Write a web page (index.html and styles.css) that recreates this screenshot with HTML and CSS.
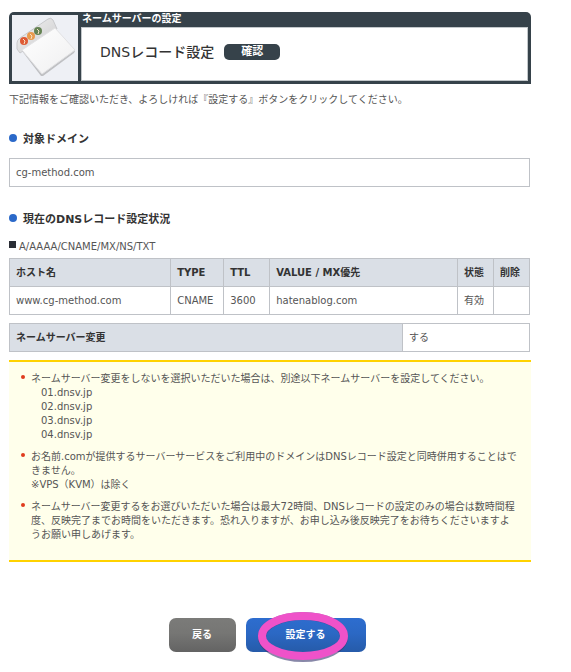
FILE: index.html
```
<!DOCTYPE html>
<html lang="ja">
<head>
  <meta charset="UTF-8">
  <title>DNSレコード設定 確認</title>
  <link rel="stylesheet" href="styles.css">
</head>
<body>
  <header class="header">
    <div class="header-icon">
      <svg width="66" height="65" viewBox="0 0 66 65" aria-hidden="true">
        <defs>
          <linearGradient id="tab" x1="0" y1="0" x2="1" y2="1">
            <stop offset="0" stop-color="#f4f4f4"/>
            <stop offset="1" stop-color="#c9c9cb"/>
          </linearGradient>
          <linearGradient id="sheet" x1="0" y1="0" x2="1" y2="1">
            <stop offset="0" stop-color="#ffffff"/>
            <stop offset="1" stop-color="#efeff0"/>
          </linearGradient>
        </defs>
        <path d="M5 34 L5 28 Q5 25 8 23 L36 4 Q39 2 41 5 L45 14 L11 36 L8 38 Z" fill="url(#tab)" stroke="#c8c9cc"/>
        <path d="M10 36 L43 14 L63 36 L62 38 L31 61 L29 61 Z" fill="#bfc0c3"/>
        <path d="M10 35 L43 13 L63 35 L30 59 Z" fill="url(#sheet)" stroke="#e2e2e4"/>
        <circle cx="12" cy="26" r="4" fill="#de5a35"/>
        <circle cx="19" cy="21" r="4" fill="#e99a4d"/>
        <circle cx="26" cy="16" r="4" fill="#648253"/>
        <path d="M11 24 l2 2 l-1 3 M18 19 l2 2 l-1 3 M25 14 l2 2 l-1 3" fill="none" stroke="#f7e2c4"/>
      </svg>
    </div>
    <div class="header-main">
      <p class="header-category">ネームサーバーの設定</p>
      <div class="header-title">
        <h1>DNSレコード設定</h1>
        <span class="step">確認</span>
      </div>
    </div>
  </header>

  <p class="lead">下記情報をご確認いただき、よろしければ『設定する』ボタンをクリックしてください。</p>

  <h2>対象ドメイン</h2>
  <p class="domain">cg-method.com</p>

  <h2>現在のDNSレコード設定状況</h2>
  <h3>A/AAAA/CNAME/MX/NS/TXT</h3>
  <table class="records">
    <thead>
      <tr>
        <th class="col-host">ホスト名</th>
        <th class="col-type">TYPE</th>
        <th class="col-ttl">TTL</th>
        <th>VALUE / MX優先</th>
        <th class="col-state">状態</th>
        <th class="col-state">削除</th>
      </tr>
    </thead>
    <tbody>
      <tr>
        <td>www.cg-method.com</td>
        <td>CNAME</td>
        <td>3600</td>
        <td>hatenablog.com</td>
        <td>有効</td>
        <td></td>
      </tr>
    </tbody>
  </table>

  <table class="change">
    <tr>
      <th>ネームサーバー変更</th>
      <td class="col-change">する</td>
    </tr>
  </table>

  <ul class="notes">
    <li>ネームサーバー変更をしないを選択いただいた場合は、別途以下ネームサーバーを設定してください。
      <div class="servers">01.dnsv.jp<br>02.dnsv.jp<br>03.dnsv.jp<br>04.dnsv.jp</div>
    </li>
    <li>お名前.comが提供するサーバーサービスをご利用中のドメインはDNSレコード設定と同時併用することはできません。<br>※VPS（KVM）は除く</li>
    <li>ネームサーバー変更するをお選びいただいた場合は最大72時間、DNSレコードの設定のみの場合は数時間程度、反映完了までお時間をいただきます。恐れ入りますが、お申し込み後反映完了をお待ちくださいますようお願い申しあげます。</li>
  </ul>

  <div class="buttons">
    <button type="button" class="btn back">戻る</button>
    <div class="submit-wrap">
      <button type="submit" class="btn submit">設定する</button>
      <svg class="circle" width="92" height="50" viewBox="0 0 92 50" aria-hidden="true">
        <ellipse cx="46" cy="25" rx="41" ry="21" fill="none" stroke="#39386e" stroke-width="8" opacity="0.6"/>
        <ellipse cx="46" cy="24" rx="41" ry="20" fill="none" stroke="#ef52c9" stroke-width="8"/>
      </svg>
    </div>
  </div>
</body>
</html>
```

FILE: styles.css
```
* { box-sizing: border-box; }

body {
  margin: 0;
  padding: 12px 40px 20px 9px;
  min-height: 100vh;
  background: #fff;
  color: #555;
  font-family: "DejaVu Sans", "Noto Sans CJK JP", sans-serif;
  font-size: 10px;
  line-height: 14px;
}

h1, h2, h3, p, ul { margin: 0; padding: 0; }

/* header */
.header {
  display: flex;
  gap: 3px;
  padding: 0 3px 3px;
  background: #36424a;
  border-radius: 5px 5px 0 0;
}
.header-icon {
  margin-top: 3px;
  height: 66px;
  background: #eef0f5;
}
.header-icon svg { display: block; }
.header-main {
  flex: 1;
  display: flex;
  flex-direction: column;
}
.header-category {
  height: 15px;
  line-height: 13px;
  padding-left: 1px;
  color: #fff;
  font-weight: bold;
}
.header-title {
  flex: 1;
  display: flex;
  align-items: center;
  gap: 10px;
  padding: 0 18px 4px;
  background: #fff;
  border: 1px solid #c3c8cb;
}
.header-title h1 {
  color: #333;
  font-size: 14px;
  line-height: 20px;
  font-weight: 500;
}
.step {
  width: 56px;
  border-radius: 5px;
  background: #36424a;
  color: #fff;
  font-size: 11px;
  line-height: 16px;
  font-weight: bold;
  text-align: center;
}

.lead { margin-top: 9px; }

h2 {
  display: flex;
  align-items: center;
  gap: 6px;
  margin: 25px 0 10px;
  color: #333;
  font-size: 11px;
  line-height: 16px;
}
h2::before {
  content: "";
  width: 8px;
  height: 8px;
  margin-bottom: 4px;
  border-radius: 50%;
  background: #2b69c9;
}
.domain {
  margin-right: 1px;
  padding: 7px 6px 6px;
  border: 1px solid #bfc2c7;
}
h3 {
  display: flex;
  align-items: center;
  gap: 3px;
  margin: 12px 0 4px;
  font-size: 10px;
  font-weight: normal;
}
h3::before {
  content: "";
  width: 7px;
  height: 7px;
  margin-bottom: 5px;
  background: #2a2d35;
}

/* tables */
table {
  width: calc(100% - 1px);
  table-layout: fixed;
  border-collapse: collapse;
}
th, td {
  height: 28px;
  padding: 0 6px;
  border: 1px solid #bfc2c7;
  text-align: left;
}
th {
  background: #dadfe6;
  color: #333;
}
.col-host { width: 31%; }
.col-type { width: 53px; }
.col-ttl { width: 46px; }
.col-state { width: 36px; }
.change { margin-top: 8px; }
.col-change { width: 127px; }

/* notes */
.notes {
  margin-top: 8px;
  padding: 10px 12px;
  border: solid #ffd200;
  border-width: 2px 0;
  background: #ffffeb;
  list-style: none;
}
.notes li {
  display: block;
  position: relative;
  padding-left: 10px;
  margin-bottom: 8px;
}
.notes li::before {
  content: "";
  position: absolute;
  left: 0;
  top: 3px;
  width: 4px;
  height: 4px;
  border-radius: 50%;
  background: #e03c1e;
}
.servers { padding-left: 10px; }

/* buttons */
.buttons {
  display: flex;
  justify-content: center;
  gap: 10px;
  margin-top: 56px;
  padding-right: 6px;
}
.btn {
  height: 34px;
  padding: 0 0 4px;
  border: none;
  border-radius: 7px;
  color: #fff;
  font-family: inherit;
  font-size: 10px;
  font-weight: bold;
  cursor: pointer;
}
.back {
  width: 67px;
  background: linear-gradient(#7b7b79, #767674 45%, #636363);
}
.submit {
  width: 120px;
  background: linear-gradient(#2d6dcf, #2b68c4 45%, #265ba9);
}
.submit-wrap { position: relative; }
.circle {
  position: absolute;
  left: 11px;
  top: -6px;
  pointer-events: none;
}
```
